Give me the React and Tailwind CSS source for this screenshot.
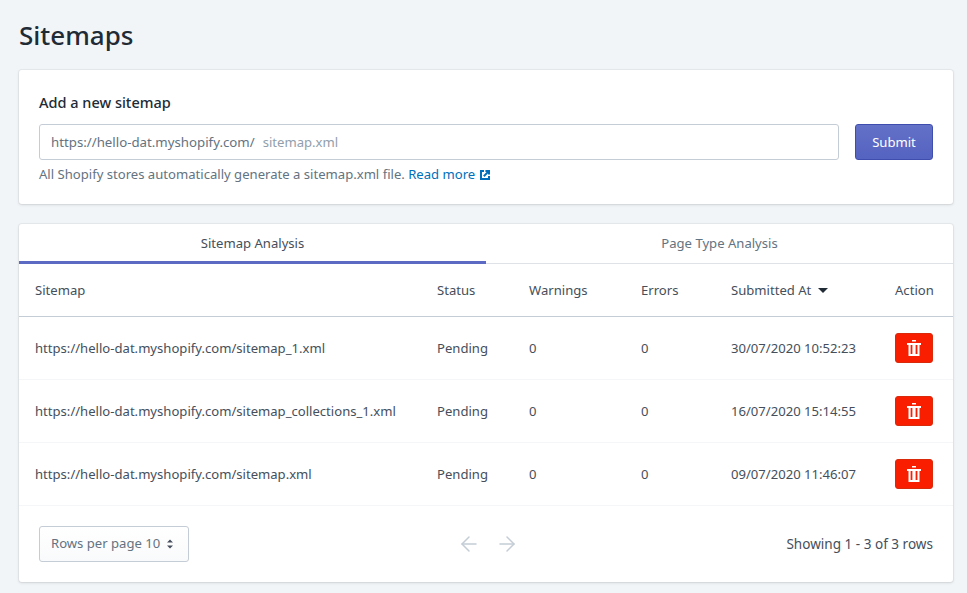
import React from "react";
import { ArrowLeft, ArrowRight } from "lucide-react";

const rows = [
  { url: "https://hello-dat.myshopify.com/sitemap_1.xml", date: "30/07/2020 10:52:23" },
  { url: "https://hello-dat.myshopify.com/sitemap_collections_1.xml", date: "16/07/2020 15:14:55" },
  { url: "https://hello-dat.myshopify.com/sitemap.xml", date: "09/07/2020 11:46:07" },
];

const TrashIcon = () => (
  <svg width="14" height="16" viewBox="0 0 14 16" fill="#fff">
    <path d="M5 0h4v1.6H5zM0 3h14v2H0z" />
    <path fillRule="evenodd" d="M1.5 5h11v11h-11zM3.6 5v9h1.8V5zM8.6 5v9h1.8V5z" />
  </svg>
);

const ExternalIcon = () => (
  <svg width="10" height="10" viewBox="0 0 10 10" className="ml-[5px] inline-block" fill="none" stroke="#006fbb" strokeWidth="2">
    <path d="M4 1H1v8h8V6" />
    <path d="M3.8 6.2 8.6 1.4M5.4 1h3.6v3.6" />
  </svg>
);

const App = () => {
  return (
    <div className="min-h-[593px] bg-[#f2f5f8] pt-[16px] pr-[14px] pb-[10px] pl-[19px] text-[13.1px] text-[#454f5b] [font-family:'Noto_Sans','Open_Sans',sans-serif]">
      <h1 className="mb-[16px] text-[26px] leading-[38px] font-medium text-[#212b36]">Sitemaps</h1>

      <div className="mb-[20px] h-[134px] rounded-[3px] bg-white px-[20px] pt-[21px] shadow-[0_0_0_1px_rgba(63,63,68,0.05),0_1px_3px_0_rgba(63,63,68,0.15)]">
        <h2 className="text-[14.5px] leading-[22px] font-medium text-[#212b36]">Add a new sitemap</h2>
        <div className="mt-[11px] flex items-center gap-[16px]">
          <div className="flex h-[36px] flex-1 items-center rounded-[3px] border border-[#c4cdd5] px-[11px] pt-[2px]">
            <span className="text-[13.25px] text-[#637381]">https://hello-dat.myshopify.com/</span>
            <span className="ml-[8px] text-[#919eab]">sitemap.xml</span>
          </div>
          <button className="h-[36px] w-[78px] rounded-[3px] border border-[#3f4eae] bg-gradient-to-b from-[#6371c7] to-[#5563c1] pt-[2px] text-white">
            Submit
          </button>
        </div>
        <p className="mt-[4px] leading-[20px] text-[#637381]">
          All Shopify stores automatically generate a sitemap.xml file.{" "}
          <a className="text-[#006fbb]">
            Read more
            <ExternalIcon />
          </a>
        </p>
      </div>

      <div className="h-[358px] rounded-[3px] bg-white shadow-[0_0_0_1px_rgba(63,63,68,0.05),0_1px_3px_0_rgba(63,63,68,0.15)]">
        <div className="flex h-[40px] border-b border-[#dfe3e8]">
          <div className="flex h-[40px] w-1/2 items-center justify-center border-b-[3px] border-[#5c6ac4] pt-[3px] text-[#454f5b]">
            Sitemap Analysis
          </div>
          <div className="flex w-1/2 items-center justify-center text-[#637381]">Page Type Analysis</div>
        </div>

        <table className="w-full table-fixed border-collapse">
          <colgroup>
            <col className="w-[418px]" />
            <col className="w-[92px]" />
            <col className="w-[112px]" />
            <col className="w-[90px]" />
            <col className="w-[164px]" />
            <col />
          </colgroup>
          <thead>
            <tr className="h-[52px] border-b border-[#c4cdd5] text-left">
              <th className="pt-[2px] pl-[16px] font-normal">Sitemap</th>
              <th className="pt-[2px] font-normal">Status</th>
              <th className="pt-[2px] font-normal">Warnings</th>
              <th className="pt-[2px] font-normal">Errors</th>
              <th className="pt-[2px] font-normal">
                Submitted At
                <span className="ml-[7px] inline-block translate-y-[-2px] border-x-[5px] border-t-[5px] border-x-transparent border-t-[#212b36]" />
              </th>
              <th className="pt-[2px] font-normal">Action</th>
            </tr>
          </thead>
          <tbody>
            {rows.map((row) => (
              <tr key={row.url} className="h-[63px] border-b border-[#f4f6f8]">
                <td className="pt-[2px] pl-[16px] whitespace-nowrap">{row.url}</td>
                <td className="pt-[2px]">Pending</td>
                <td className="pt-[2px]">0</td>
                <td className="pt-[2px]">0</td>
                <td className="pt-[2px]">{row.date}</td>
                <td>
                  <button className="flex h-[30px] w-[38px] items-center justify-center rounded-[3px] border border-[#d92a0c] bg-[#fa1e00]">
                    <TrashIcon />
                  </button>
                </td>
              </tr>
            ))}
          </tbody>
        </table>

        <div className="flex h-[76px] items-center justify-between px-[20px]">
          <div className="flex h-[36px] w-[150px] items-center rounded-[3px] border border-[#c4cdd5] bg-gradient-to-b from-white to-[#f9fafb] pt-[1px] pl-[11px] text-[#637381]">
            Rows per page 10
            <svg width="8" height="12" viewBox="0 0 8 12" className="ml-[6px]" fill="#454f5b">
              <path d="M4 1.5 7 4.5H1zM4 10.5 1 7.5h6z" />
            </svg>
          </div>
          <div className="flex gap-[14px] text-[#c4cdd5]">
            <ArrowLeft size={24} strokeWidth={1.5} />
            <ArrowRight size={24} strokeWidth={1.5} />
          </div>
          <span className="pt-[2px] text-[13.55px]">Showing 1 - 3 of 3 rows</span>
        </div>
      </div>
    </div>
  );
};

export default App;
